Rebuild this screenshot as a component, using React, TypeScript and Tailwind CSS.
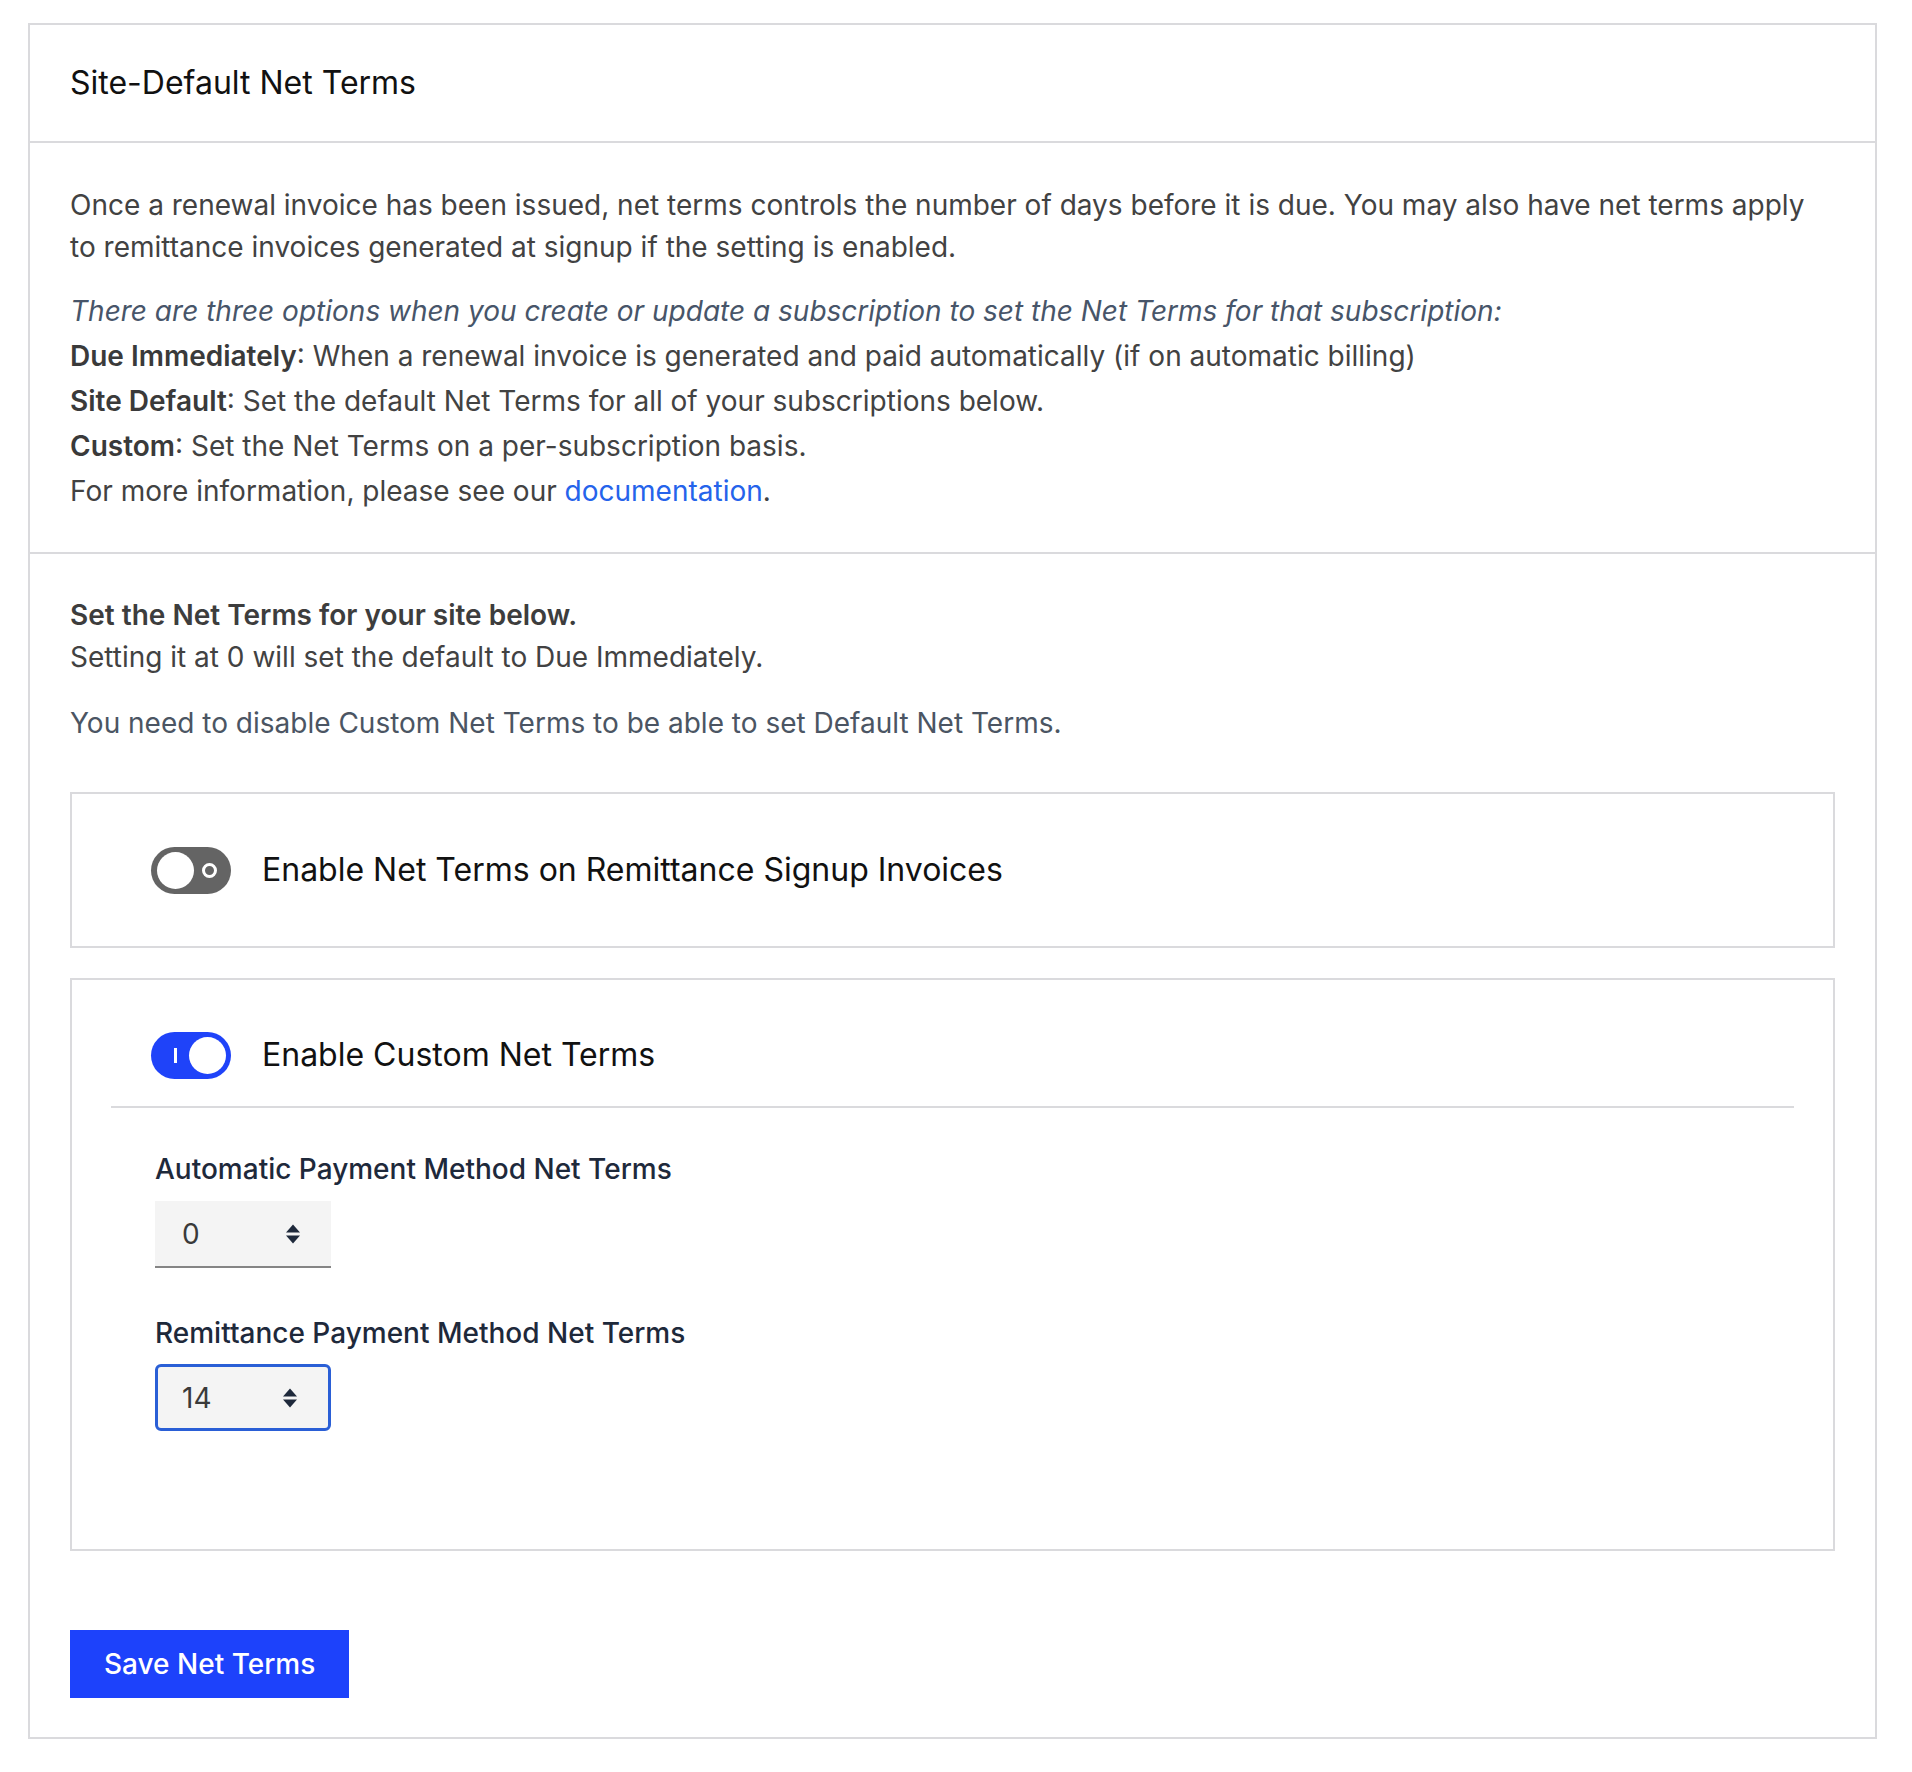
import React from "react";

function UpDown() {
  return (
    <svg width="16" height="21" viewBox="0 0 16 21" className="absolute right-[30px] top-1/2 -translate-y-1/2">
      <path d="M8 1 L15 9 L1 9 Z" fill="#1e293b" />
      <path d="M8 20 L15 12 L1 12 Z" fill="#1e293b" />
    </svg>
  );
}

function ToggleOff() {
  return (
    <div className="relative w-[80px] h-[47px] rounded-full bg-[#646464] shrink-0">
      <div className="absolute left-[6px] top-[5px] w-[37px] h-[37px] rounded-full bg-white" />
      <div className="absolute left-[51px] top-[16px] w-[15px] h-[15px] rounded-full border-[3.5px] border-white" />
    </div>
  );
}

function ToggleOn() {
  return (
    <div className="relative w-[80px] h-[47px] rounded-full bg-[#1f43f9] shrink-0">
      <div className="absolute left-[23px] top-[16px] w-[3px] h-[15px] bg-white" />
      <div className="absolute right-[5px] top-[5px] w-[37px] h-[37px] rounded-full bg-white" />
    </div>
  );
}

export default function App() {
  return (
    <div className="bg-white min-h-[1772px] pt-[23px] pl-[28px]" style={{ fontFamily: "Inter, 'Noto Sans', sans-serif" }}>
      <div className="w-[1849px] border-2 border-[#dadadd] bg-white">
        {/* Header */}
        <div className="h-[118px] flex items-center px-[40px] border-b-2 border-[#dadadd]">
          <h2 className="text-[32px] leading-[38px] text-[#111111] font-normal">Site-Default Net Terms</h2>
        </div>

        {/* Description */}
        <div className="px-[40px] pt-[41px] pb-[38px] border-b-2 border-[#dadadd] text-[28px] text-[#424242]">
          <p className="leading-[42px] mb-[21px]">
            Once a renewal invoice has been issued, net terms controls the number of days before it is due. You may also have net terms apply to remittance invoices generated at signup if the setting is enabled.
          </p>
          <div className="leading-[45px]">
            <p className="italic text-[#475569]">There are three options when you create or update a subscription to set the Net Terms for that subscription:</p>
            <p><span className="font-semibold text-[#3a3a3a]">Due Immediately</span>: When a renewal invoice is generated and paid automatically (if on automatic billing)</p>
            <p><span className="font-semibold text-[#3a3a3a]">Site Default</span>: Set the default Net Terms for all of your subscriptions below.</p>
            <p><span className="font-semibold text-[#3a3a3a]">Custom</span>: Set the Net Terms on a per-subscription basis.</p>
            <p>For more information, please see our <a className="text-[#2563eb]" href="#">documentation</a>.</p>
          </div>
        </div>

        {/* Settings */}
        <div className="px-[40px] pt-[40px] pb-[39px]">
          <p className="text-[28px] leading-[42px] font-semibold text-[#3d3d3d]">Set the Net Terms for your site below.</p>
          <p className="text-[28px] leading-[42px] text-[#424242] mb-[24px]">Setting it at 0 will set the default to Due Immediately.</p>
          <p className="text-[28px] leading-[42px] text-[#4b5563]">You need to disable Custom Net Terms to be able to set Default Net Terms.</p>

          <div className="mt-[48px] border-2 border-[#dadadd] p-[39px]">
            <div className="h-[74px] flex items-center pl-[40px] gap-[31px]">
              <ToggleOff />
              <span className="text-[32px] text-[#111111]">Enable Net Terms on Remittance Signup Invoices</span>
            </div>
          </div>

          <div className="mt-[30px] border-2 border-[#dadadd] px-[39px] pt-[40px] pb-[118px]">
            <div className="h-[70px] flex items-center pl-[40px] gap-[31px]">
              <ToggleOn />
              <span className="text-[32px] text-[#111111]">Enable Custom Net Terms</span>
            </div>
            <div className="mt-[16px] h-[2px] bg-[#dadadd]" />
            <div className="pl-[44px] pt-[45px]">
              <label className="block text-[28px] leading-[32px] font-medium text-[#1e293b]">Automatic Payment Method Net Terms</label>
              <div className="relative mt-[16px] w-[176px] h-[67px] bg-[#f4f4f4] border-b-2 border-[#858585] flex items-center pl-[27px] text-[28px] text-[#3a3a3a]">
                0
                <UpDown />
              </div>
              <label className="block mt-[49px] text-[28px] leading-[32px] font-medium text-[#1e293b]">Remittance Payment Method Net Terms</label>
              <div className="relative mt-[15px] w-[176px] h-[67px] bg-[#f4f4f4] border-[3px] border-[#2a5fd6] rounded-[6px] flex items-center pl-[24px] text-[28px] text-[#3a3a3a]">
                14
                <UpDown />
              </div>
            </div>
          </div>

          <button className="mt-[79px] h-[68px] px-[34px] bg-[#1d42fb] text-white text-[28px] font-medium">
            Save Net Terms
          </button>
        </div>
      </div>
    </div>
  );
}
